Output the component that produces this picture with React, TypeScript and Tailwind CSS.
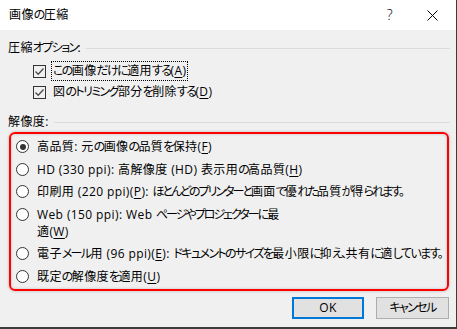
const Key = ({ k }: { k: string }) => (
  <>
    (<span className="underline underline-offset-2">{k}</span>)
  </>
);

// kana runs are set tighter, like the UI font of the dialog
const K = ({ children }: { children: React.ReactNode }) => (
  <span className="tracking-[-1.6px]">{children}</span>
);

const Kt = ({ children }: { children: React.ReactNode }) => (
  <span className="tracking-[-2px]">{children}</span>
);

const Check = () => (
  <span className="w-[13px] h-[13px] border border-[#333] bg-[#f0f0f0] flex items-center justify-center shrink-0">
    <svg width="11" height="11" viewBox="0 0 11 11">
      <path d="M1.5 5.5 L4.2 8.2 L9.5 2.5" fill="none" stroke="#4a4a4a" strokeWidth="1.3" />
    </svg>
  </span>
);

const Radio = ({ on }: { on?: boolean }) => (
  <span className="w-[13px] h-[13px] rounded-full border border-[#333] bg-white flex items-center justify-center shrink-0">
    {on && <span className="w-[6px] h-[6px] rounded-full bg-[#333]" />}
  </span>
);

const Option = ({ on, children }: { on?: boolean; children: React.ReactNode }) => (
  <div className="flex items-start">
    <div className="h-[22.5px] flex items-center pl-[5px] pr-[8px]">
      <Radio on={on} />
    </div>
    <div className="leading-[17px] py-[2.75px] whitespace-nowrap">{children}</div>
  </div>
);

const GroupTitle = ({ children }: { children: React.ReactNode }) => (
  <div className="flex items-center gap-[5px] h-[16px] leading-[16px] pr-[6px]">
    <span>{children}</span>
    <div className="flex-1 h-px bg-[#dcdcdc]" />
  </div>
);

export default function App() {
  return (
    <div className="w-[457px] h-[329px] bg-[#f0f0f0] text-black text-[12px] tracking-[0.4px] flex flex-col border-r border-b-2 border-[#3c3c3c] [font-family:Open_Sans,Noto_Sans_CJK_JP,sans-serif] [font-feature-settings:'palt']">
      <div className="h-[30px] bg-white flex items-center pl-[9px] shrink-0">
        <span className="leading-[16px]">
          画像<K>の</K>圧縮
        </span>
        <span className="ml-auto mr-[34px] text-[14px] font-light leading-none">?</span>
        <svg width="11" height="11" viewBox="0 0 11 11" className="mr-[18px]">
          <path d="M0.5 0.5 L10.5 10.5 M10.5 0.5 L0.5 10.5" stroke="#000" strokeWidth="1" />
        </svg>
      </div>

      <div className="flex flex-col pl-[8px] pt-[10px]">
        <GroupTitle>
          圧縮<K>オプション</K>:
        </GroupTitle>
        <div className="flex flex-col pl-[25px] mt-[5px] gap-[1px]">
          <div className="h-[20px] flex items-center gap-[6px]">
            <Check />
            <span className="leading-[16px] px-[1px] py-[1px] outline outline-1 outline-dotted outline-[#000]">
              <K>この</K>画像<K>だけに</K>適用<K>する</K>
              <Key k="A" />
            </span>
          </div>
          <div className="h-[20px] flex items-center gap-[6px]">
            <Check />
            <span className="leading-[16px] px-[1px] py-[1px]">
              図<K>のトリミング</K>部分<K>を</K>削除<K>する</K>
              <Key k="D" />
            </span>
          </div>
        </div>

        <div className="mt-[12px]">
          <GroupTitle>解像度:</GroupTitle>
        </div>

        <div className="mt-[2px] mr-[7px] ml-[1px] border-2 border-[#ff0000] rounded-[6px] py-[1.5px] shadow-[0_0_3px_rgba(0,0,0,0.25),inset_0_0_3px_rgba(0,0,0,0.2)]">
          <Option on>
            高品質: 元<K>の</K>画像<K>の</K>品質<K>を</K>保持<Key k="F" />
          </Option>
          <Option>
            HD (330 ppi): 高解像度 (HD) 表示用<K>の</K>高品質<Key k="H" />
          </Option>
          <Option>
            印刷用 (220 ppi)<Key k="P" />: <Kt>ほとんどのプリンターと</Kt>画面<Kt>で</Kt>優<Kt>れた</Kt>品質<Kt>が</Kt>得
            <Kt>られます。</Kt>
          </Option>
          <Option>
            Web (150 ppi): Web <Kt>ページやプロジェクターに</Kt>最
            <br />適<Key k="W" />
          </Option>
          <Option>
            電子<K>メール</K>用 (96 ppi)<Key k="E" />: <K>ドキュメントのサイズを</K>最小限<K>に</K>抑<K>え、</K>共有<K>に</K>適
            <K>しています。</K>
          </Option>
          <Option>
            既定<K>の</K>解像度<K>を</K>適用<Key k="U" />
          </Option>
        </div>

        <div className="flex justify-end gap-[12px] mt-[6px] pr-[7px]">
          <button className="w-[72px] h-[22px] border-2 border-[#0078d7] bg-[#e1e1e1] leading-none">OK</button>
          <button className="w-[73px] h-[22px] border border-[#adadad] bg-[#e1e1e1] leading-none">
            <K>キャンセル</K>
          </button>
        </div>
      </div>
    </div>
  );
}
